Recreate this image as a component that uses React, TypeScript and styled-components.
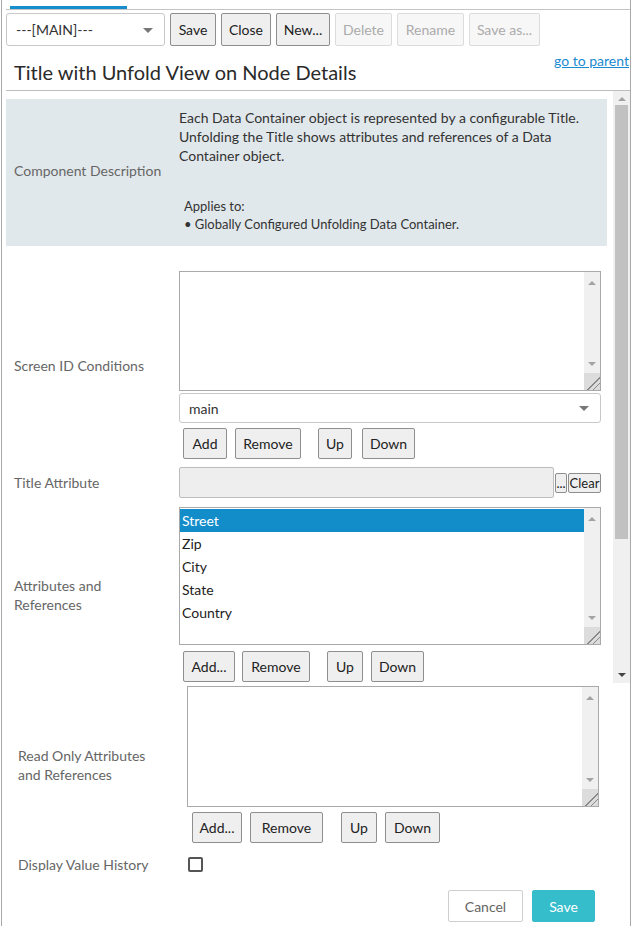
import styled, { createGlobalStyle } from "styled-components";

const GlobalStyle = createGlobalStyle`
  html, body { margin: 0; padding: 0; background: #fff; }
  body {
    font-family: "Segoe UI", Lato, "Open Sans", sans-serif;
    font-size: 14px;
    color: #333;
  }
  * { box-sizing: border-box; }
`;

const Frame = styled.div`
  width: 630px;
  height: 926px;
  margin-left: 1px;
  border-left: 1px solid #a9a9a9;
  border-right: 1px solid #a9a9a9;
  display: flex;
  flex-direction: column;
  overflow: hidden;
`;

const TabStrip = styled.div`
  margin: 6px 0 0 4px;
  height: 4px;
  border-bottom: 1px solid #c4c4c4;
`;

const ActiveTab = styled.div`
  margin-left: 4px;
  width: 117px;
  height: 3px;
  background: #168dcd;
`;

const Toolbar = styled.div`
  display: flex;
  gap: 5px;
  margin-top: 3px;
  padding-left: 4px;
  height: 33px;
`;

const SelectBox = styled.div<{ $w?: number; $h?: number; $top?: number }>`
  position: relative;
  width: ${(p) => (p.$w ? `${p.$w}px` : "100%")};
  height: ${(p) => p.$h ?? 30}px;
  margin-top: ${(p) => p.$top ?? 0}px;
  border: 1px solid #c8c8c8;
  border-radius: 3px;
  background: #fff;
  display: flex;
  align-items: center;
  padding-left: 9px;
  color: #333;
  font-size: 14px;
`;

const Caret = styled.span`
  position: absolute;
  right: 11px;
  top: 50%;
  margin-top: -2px;
  border-left: 5px solid transparent;
  border-right: 5px solid transparent;
  border-top: 5px solid #777;
`;

const Button = styled.button<{ $w: number; $h?: number; $gap?: number }>`
  width: ${(p) => p.$w}px;
  height: ${(p) => p.$h ?? 31}px;
  margin-left: ${(p) => p.$gap ?? 0}px;
  padding: 0;
  flex: none;
  border: 1px solid #8e8e8e;
  border-radius: 2px;
  background: #efefef;
  color: #222;
  font-family: inherit;
  font-size: 14px;

  &:disabled {
    border-color: #dcdcdc;
    background: #f7f7f7;
    color: #ababab;
  }
`;

const Header = styled.div`
  height: 44px;
  display: flex;
  justify-content: space-between;
  align-items: flex-start;
  padding: 0 1px 0 12px;
`;

const Title = styled.h1`
  margin: 14px 0 0;
  font-size: 20px;
  font-weight: 400;
  line-height: 25px;
  color: #2a2a2a;
`;

const ParentLink = styled.a`
  margin-top: 6px;
  font-size: 14px;
  line-height: 18px;
  color: #1b8bcf;
  text-decoration: underline;
`;

const Divider = styled.div`
  margin-left: 4px;
  border-top: 1px solid #bdbdbd;
`;

const Pane = styled.div`
  height: 592px;
  margin-left: 4px;
  display: flex;
`;

const PaneContent = styled.div`
  flex: 1;
  overflow: hidden;
  padding: 8px 6px 0 0;
`;

const Scrollbar = styled.div`
  width: 17px;
  flex: none;
  background: #f0f0f0;
  display: flex;
  flex-direction: column;
  align-items: center;
`;

const Arrow = styled.span<{ $down?: boolean; $color?: string; $mt?: number; $mb?: number }>`
  width: 0;
  height: 0;
  margin-top: ${(p) => p.$mt ?? 0}px;
  margin-bottom: ${(p) => p.$mb ?? 0}px;
  border-left: 4px solid transparent;
  border-right: 4px solid transparent;
  ${(p) =>
    p.$down
      ? `border-top: 4px solid ${p.$color ?? "#a3a3a3"};`
      : `border-bottom: 4px solid ${p.$color ?? "#a3a3a3"};`}
`;

const Thumb = styled.div`
  width: 13px;
  height: 434px;
  margin-top: 4px;
  background: #c1c1c1;
`;

const ScrollSpacer = styled.div`
  flex: 1;
`;

const DescBox = styled.div`
  display: grid;
  grid-template-columns: 165px 1fr;
  align-items: center;
  background: #e1e8eb;
  padding: 9px 6px 13px 8px;
`;

const Label = styled.div`
  color: #666;
  font-size: 14px;
  line-height: 19px;
`;

const DescText = styled.p`
  margin: 0;
  line-height: 19px;
  color: #333;
`;

const Applies = styled.div`
  margin: 32px 0 0 5px;
  font-size: 13px;
  line-height: 18px;
  color: #333;
`;

const Row = styled.div<{ $top: number; $indent?: number; $label?: number }>`
  display: grid;
  grid-template-columns: ${(p) => p.$label ?? 165}px 1fr;
  align-items: center;
  margin-top: ${(p) => p.$top}px;
  padding: 0 6px 0 ${(p) => p.$indent ?? 8}px;
`;

const Field = styled.div<{ $w?: number }>`
  display: flex;
  flex-direction: column;
  width: ${(p) => (p.$w ? `${p.$w}px` : "auto")};
`;

const Box = styled.div<{ $h: number }>`
  height: ${(p) => p.$h}px;
  border: 1px solid #a9a9a9;
  background: #fff;
  display: flex;
`;

const BoxBody = styled.div`
  flex: 1;
  padding-top: 1px;
`;

const MiniScroll = styled.div`
  width: 16px;
  background: #f0f0f0;
  display: flex;
  flex-direction: column;
  align-items: center;
  padding-top: 9px;
`;

const Grip = styled.div`
  width: 16px;
  height: 17px;
  margin-top: 7px;
  background: linear-gradient(135deg, #dcdcdc 0 60%, #888 60% 64%, #dcdcdc 64% 76%, #888 76% 80%, #dcdcdc 80%);
`;

const Item = styled.div<{ $sel?: boolean }>`
  height: 23px;
  line-height: 23px;
  padding-left: 2px;
  color: ${(p) => (p.$sel ? "#fff" : "#222")};
  background: ${(p) => (p.$sel ? "#138dca" : "transparent")};
`;

const BtnRow = styled.div<{ $top?: number; $left?: number }>`
  display: flex;
  margin-top: ${(p) => p.$top ?? 5}px;
  padding-left: ${(p) => p.$left ?? 4}px;
`;

const InlineField = styled.div`
  display: flex;
  align-items: center;
`;

const ReadOnlyInput = styled.div`
  width: 375px;
  height: 31px;
  border: 1px solid #bdbdbd;
  border-radius: 2px;
  background: #eeeeee;
`;

const SmallButton = styled.button<{ $w: number }>`
  width: ${(p) => p.$w}px;
  height: 20px;
  margin-left: 1px;
  padding: 0;
  border: 1px solid #8e8e8e;
  border-radius: 2px;
  background: #efefef;
  color: #222;
  font-family: inherit;
  font-size: 13px;
  line-height: 16px;
`;

const Checkbox = styled.span`
  display: block;
  width: 15px;
  height: 15px;
  margin-left: 1px;
  border: 2px solid #555;
  border-radius: 2px;
`;

const Footer = styled.div`
  display: flex;
  justify-content: flex-end;
  gap: 9px;
  margin-top: 16px;
  padding-right: 35px;
`;

const FooterButton = styled.button<{ $primary?: boolean; $w: number }>`
  width: ${(p) => p.$w}px;
  height: 32px;
  padding: 0;
  border: 1px solid ${(p) => (p.$primary ? "#35bdcc" : "#cfcfcf")};
  border-radius: 2px;
  background: ${(p) => (p.$primary ? "#35bdcc" : "#fff")};
  color: ${(p) => (p.$primary ? "#fff" : "#666")};
  font-family: inherit;
  font-size: 14px;
`;

function ScrollArea({ h, children }: { h: number; children?: React.ReactNode }) {
  return (
    <Box $h={h}>
      <BoxBody>{children}</BoxBody>
      <MiniScroll>
        <Arrow />
        <ScrollSpacer />
        <Arrow $down />
        <Grip />
      </MiniScroll>
    </Box>
  );
}

const attributes = ["Street", "Zip", "City", "State", "Country"];

export default function App() {
  return (
    <>
      <GlobalStyle />
      <Frame>
        <TabStrip>
          <ActiveTab />
        </TabStrip>
        <Toolbar>
          <SelectBox $w={159} $h={33}>
            ---[MAIN]---
            <Caret />
          </SelectBox>
          <Button $w={46} $h={33}>Save</Button>
          <Button $w={50} $h={33}>Close</Button>
          <Button $w={54} $h={33}>New...</Button>
          <Button $w={57} $h={33} disabled>Delete</Button>
          <Button $w={67} $h={33} disabled>Rename</Button>
          <Button $w={71} $h={33} disabled>Save as...</Button>
        </Toolbar>
        <Header>
          <Title>Title with Unfold View on Node Details</Title>
          <ParentLink>go to parent</ParentLink>
        </Header>
        <Divider />
        <Pane>
          <PaneContent>
            <DescBox>
              <Label>Component Description</Label>
              <div>
                <DescText>
                  Each Data Container object is represented by a configurable Title.
                  Unfolding the Title shows attributes and references of a Data
                  Container object.
                </DescText>
                <Applies>
                  Applies to:
                  <br />• Globally Configured Unfolding Data Container.
                </Applies>
              </div>
            </DescBox>

            <Row $top={25}>
              <Label>Screen ID Conditions</Label>
              <Field>
                <ScrollArea h={120} />
                <SelectBox $top={2}>
                  main
                  <Caret />
                </SelectBox>
                <BtnRow>
                  <Button $w={44}>Add</Button>
                  <Button $w={66} $gap={8}>Remove</Button>
                  <Button $w={34} $gap={17}>Up</Button>
                  <Button $w={53} $gap={10}>Down</Button>
                </BtnRow>
              </Field>
            </Row>

            <Row $top={8}>
              <Label>Title Attribute</Label>
              <InlineField>
                <ReadOnlyInput />
                <SmallButton $w={12}>...</SmallButton>
                <SmallButton $w={33}>Clear</SmallButton>
              </InlineField>
            </Row>

            <Row $top={9}>
              <Label>
                Attributes and
                <br />
                References
              </Label>
              <Field>
                <ScrollArea h={138}>
                  {attributes.map((a, i) => (
                    <Item key={a} $sel={i === 0}>
                      {a}
                    </Item>
                  ))}
                </ScrollArea>
                <BtnRow $top={6}>
                  <Button $w={52}>Add...</Button>
                  <Button $w={68} $gap={7}>Remove</Button>
                  <Button $w={36} $gap={17}>Up</Button>
                  <Button $w={53} $gap={8}>Down</Button>
                </BtnRow>
              </Field>
            </Row>
          </PaneContent>
          <Scrollbar>
            <Arrow $mt={6} />
            <Thumb />
            <ScrollSpacer />
            <Arrow $down $color="#444" $mb={6} />
          </Scrollbar>
        </Pane>

        <Row $top={3} $indent={16} $label={169}>
          <Label>
            Read Only Attributes
            <br />
            and References
          </Label>
          <Field $w={412}>
            <ScrollArea h={121} />
            <BtnRow $left={5}>
              <Button $w={50}>Add...</Button>
              <Button $w={73} $gap={8}>Remove</Button>
              <Button $w={36} $gap={18}>Up</Button>
              <Button $w={55} $gap={8}>Down</Button>
            </BtnRow>
          </Field>
        </Row>

        <Row $top={12} $indent={16} $label={169}>
          <Label>Display Value History</Label>
          <Checkbox />
        </Row>

        <Footer>
          <FooterButton $w={75}>Cancel</FooterButton>
          <FooterButton $w={63} $primary>
            Save
          </FooterButton>
        </Footer>
      </Frame>
    </>
  );
}
